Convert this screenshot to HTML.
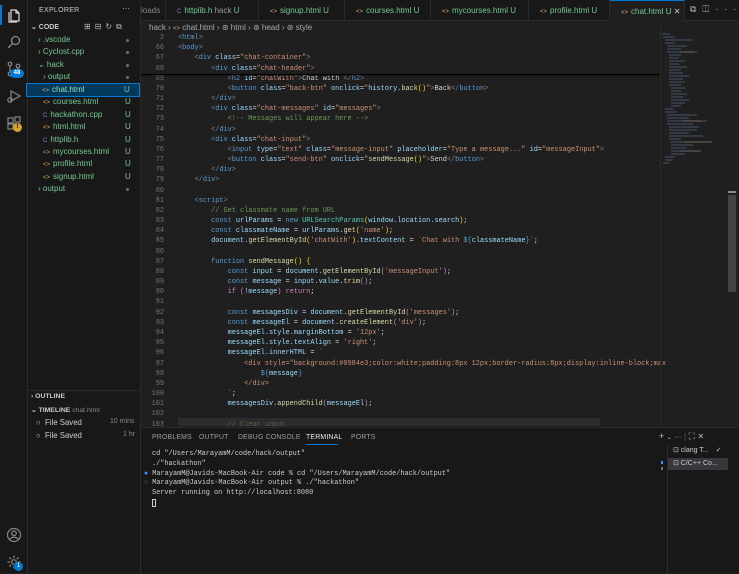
<!DOCTYPE html>
<html><head><meta charset="utf-8"><style>
*{margin:0;padding:0;box-sizing:border-box}
body{width:739px;height:573px;background:#1f1f1f;font-family:"Liberation Sans",sans-serif;overflow:hidden;position:relative;color:#ccc}
.abs{position:absolute}
#act{left:0;top:0;width:28px;height:573px;background:#181818;border-right:1px solid #2b2b2b}
#side{left:28px;top:0;width:113px;height:573px;background:#181818;border-right:1px solid #2b2b2b}
.si{position:absolute;left:0;width:112px;height:12px;font-size:8px;line-height:12px;color:#73c991;white-space:nowrap}
.si .u{position:absolute;left:97px;color:#73c991}
.si .d{position:absolute;left:98px;top:5px;width:3px;height:3px;border-radius:50%;background:#5a7a68}
.ic{color:#e8a86b;font-size:6px;margin-right:3px}
#tabs{left:141px;top:0;width:598px;height:21px;background:#181818;border-bottom:1px solid #2b2b2b}
.tab{position:absolute;top:0;height:21px;font-size:8px;line-height:22px;color:#73c991;border-right:1px solid #2b2b2b;padding-left:11px;white-space:nowrap}
.tab .ic{color:#e8a86b}
#code{left:141px;top:33px;width:520px;font-family:"Liberation Mono",monospace;font-size:6.9px;line-height:10.17px;white-space:pre;color:#d4d4d4}
.ln{display:inline-block;width:23px;text-align:right;color:#6e7681;margin-right:14px}
.t{color:#569cd6}.g{color:#808080}.a{color:#9cdcfe}.s{color:#ce9178}.c{color:#6a9955}.k{color:#569cd6}.f{color:#dcdcaa}.v{color:#9cdcfe}.y{color:#ffd700}.kw{color:#c586c0}
#term{left:141px;top:427px;width:598px;height:146px;background:#181818;border-top:1px solid #2b2b2b}
.pt{position:absolute;top:6px;font-size:6.9px;color:#9d9d9d;letter-spacing:.2px}
.tl{position:absolute;left:11px;font-family:"Liberation Mono",monospace;font-size:6.9px;color:#cccccc;white-space:pre}
</style></head><body>

<div id="act" class="abs">
 <div class="abs" style="left:0;top:5px;width:2px;height:20px;background:#0078d4"></div>
 <svg class="abs" style="left:6px;top:7px" width="16" height="16" viewBox="0 0 16 16" fill="none" stroke="#d7d7d7" stroke-width="1.2"><path d="M5 3h5l3 3v8H5z M10 3v3h3 M3 5v10h8"/></svg>
 <svg class="abs" style="left:6px;top:34px" width="16" height="16" viewBox="0 0 16 16" fill="none" stroke="#868686" stroke-width="1.3"><circle cx="9.5" cy="6.5" r="4"/><path d="M6.5 9.5L2 14"/></svg>
 <svg class="abs" style="left:6px;top:61px" width="16" height="16" viewBox="0 0 16 16" fill="none" stroke="#868686" stroke-width="1.2"><circle cx="4" cy="3" r="1.8"/><circle cx="4" cy="13" r="1.8"/><circle cx="12" cy="5" r="1.8"/><path d="M4 5v6M12 7c0 3-8 2-8 4"/></svg>
 <div class="abs" style="left:10px;top:69px;width:14px;height:9px;border-radius:5px;background:#0078d4;color:#fff;font-size:6px;line-height:9px;text-align:center;font-weight:bold">48</div>
 <svg class="abs" style="left:6px;top:88px" width="16" height="16" viewBox="0 0 16 16" fill="none" stroke="#868686" stroke-width="1.2"><path d="M5 3l9 5-9 5z"/><circle cx="4" cy="12" r="2.2"/></svg>
 <svg class="abs" style="left:6px;top:116px" width="16" height="16" viewBox="0 0 16 16" fill="none" stroke="#868686" stroke-width="1.2"><rect x="2" y="2" width="5" height="5"/><rect x="2" y="8" width="5" height="5"/><rect x="8" y="8" width="5" height="5"/><rect x="9" y="1" width="5" height="5"/></svg>
 <div class="abs" style="left:13px;top:123px;width:9px;height:9px;border-radius:50%;background:#d7a22a;color:#000;font-size:6px;line-height:9px;text-align:center;font-weight:bold">!</div>
 <svg class="abs" style="left:6px;top:527px" width="16" height="16" viewBox="0 0 16 16" fill="none" stroke="#868686" stroke-width="1.2"><circle cx="8" cy="8" r="6.5"/><circle cx="8" cy="6.3" r="2.3"/><path d="M3.5 12.5c2.5-3 6.5-3 9 0"/></svg>
 <svg class="abs" style="left:6px;top:554px" width="16" height="16" viewBox="0 0 16 16" fill="none" stroke="#868686" stroke-width="1.2"><circle cx="8" cy="8" r="2.3"/><path d="M8 1.5v2.5M8 12v2.5M1.5 8h2.5M12 8h2.5M3.4 3.4l1.8 1.8M10.8 10.8l1.8 1.8M3.4 12.6l1.8-1.8M10.8 5.2l1.8-1.8"/></svg>
 <div class="abs" style="left:14px;top:562px;width:9px;height:9px;border-radius:50%;background:#0078d4;color:#fff;font-size:6px;line-height:9px;text-align:center">1</div>
</div>

<div id="side" class="abs">
 <div class="abs" style="left:11px;top:7px;font-size:7px;color:#ccc;letter-spacing:.3px">EXPLORER</div>
 <div class="abs" style="left:94px;top:4px;font-size:8px;color:#ccc">···</div>
 <div class="abs" style="left:3px;top:23px;font-size:7px;color:#ccc;font-weight:bold">⌄ CODE</div>
 <div class="abs" style="left:56px;top:22px;font-size:8px;color:#bbb;letter-spacing:4px">⊞⊟↻⧉</div>
 <div class="si" style="top:34px;padding-left:10px">› .vscode<span class="d"></span></div>
 <div class="si" style="top:46px;padding-left:10px">› Cyclost.cpp<span class="d"></span></div>
 <div class="si" style="top:59px;padding-left:10px">⌄ hack<span class="d"></span></div>
 <div class="si" style="top:71px;padding-left:15px">› output<span class="d"></span></div>
 <div class="si" style="top:84px;padding-left:15px;background:#04395e;outline:1px solid #0078d4;color:#8fe0b0;left:-1px;width:112px"><span class="ic">&lt;&gt;</span>chat.html<span class="u">U</span></div>
 <div class="si" style="top:96px;padding-left:15px"><span class="ic">&lt;&gt;</span>courses.html<span class="u">U</span></div>
 <div class="si" style="top:109px;padding-left:15px"><span class="ic" style="color:#6c9bd2">C</span>hackathon.cpp<span class="u">U</span></div>
 <div class="si" style="top:121px;padding-left:15px"><span class="ic">&lt;&gt;</span>html.html<span class="u">U</span></div>
 <div class="si" style="top:134px;padding-left:15px"><span class="ic" style="color:#a074c4">C</span>httplib.h<span class="u">U</span></div>
 <div class="si" style="top:146px;padding-left:15px"><span class="ic">&lt;&gt;</span>mycourses.html<span class="u">U</span></div>
 <div class="si" style="top:158px;padding-left:15px"><span class="ic">&lt;&gt;</span>profile.html<span class="u">U</span></div>
 <div class="si" style="top:171px;padding-left:15px"><span class="ic">&lt;&gt;</span>signup.html<span class="u">U</span></div>
 <div class="si" style="top:183px;padding-left:10px">› output<span class="d"></span></div>
 <div class="abs" style="left:0;top:390px;width:112px;border-top:1px solid #2b2b2b"></div>
 <div class="abs" style="left:3px;top:393px;font-size:6.8px;color:#ccc;font-weight:bold">› OUTLINE</div>
 <div class="abs" style="left:3px;top:406px;font-size:6.8px;color:#ccc;font-weight:bold">⌄ TIMELINE <span style="font-weight:normal;color:#888">chat.html</span></div>
 <div class="abs" style="left:8px;top:418px;font-size:7.8px;color:#ccc">○&nbsp; File Saved</div>
 <div class="abs" style="left:82px;top:418px;font-size:7px;color:#888">10 mins</div>
 <div class="abs" style="left:8px;top:431px;font-size:7.8px;color:#ccc">○&nbsp; File Saved</div>
 <div class="abs" style="left:95px;top:431px;font-size:7px;color:#888">1 hr</div>
</div>

<div id="tabs" class="abs">
 <div class="tab" style="left:0;width:25px;padding-left:0;color:#888">loads</div>
 <div class="tab" style="left:25px;width:93px"><span class="ic" style="color:#a074c4">C</span>httplib.h <span style="color:#999">hack</span> U</div>
 <div class="tab" style="left:118px;width:86px"><span class="ic">&lt;&gt;</span>signup.html U</div>
 <div class="tab" style="left:204px;width:86px"><span class="ic">&lt;&gt;</span>courses.html U</div>
 <div class="tab" style="left:290px;width:98px"><span class="ic">&lt;&gt;</span>mycourses.html U</div>
 <div class="tab" style="left:388px;width:81px"><span class="ic">&lt;&gt;</span>profile.html U</div>
 <div class="tab" style="left:469px;width:75px;background:#1f1f1f;border-top:1px solid #0078d4;height:22px"><span class="ic">&lt;&gt;</span>chat.html U <span style="color:#ccc">✕</span></div>
 <div class="abs" style="left:549px;top:4px;font-size:9px;color:#bbb;letter-spacing:6px">⧉◫···</div>
</div>

<div class="abs" style="left:149px;top:23px;font-size:8px;color:#a9a9a9;white-space:nowrap">hack › <span style="color:#e8a86b;font-size:6px">&lt;&gt;</span> chat.html › ⊛ html › ⊛ head › ⊛ style</div>

<div id="code" class="abs"><span class="ln">2</span><span class="g">&lt;</span><span class="t">html</span><span class="g">&gt;</span>
<span class="ln">66</span><span class="g">&lt;</span><span class="t">body</span><span class="g">&gt;</span>
<span class="ln">67</span>    <span class="g">&lt;</span><span class="t">div</span> <span class="a">class</span>=<span class="s">"chat-container"</span><span class="g">&gt;</span>
<span class="ln">68</span>        <span class="g">&lt;</span><span class="t">div</span> <span class="a">class</span>=<span class="s">"chat-header"</span><span class="g">&gt;</span>
<span class="ln">69</span>            <span class="g">&lt;</span><span class="t">h2</span> <span class="a">id</span>=<span class="s">"chatWith"</span><span class="g">&gt;</span>Chat with <span class="g">&lt;/</span><span class="t">h2</span><span class="g">&gt;</span>
<span class="ln">70</span>            <span class="g">&lt;</span><span class="t">button</span> <span class="a">class</span>=<span class="s">"back-btn"</span> <span class="a">onclick</span>=<span class="s">"</span><span class="v">history</span>.<span class="f">back</span><span class="y">()</span><span class="s">"</span><span class="g">&gt;</span>Back<span class="g">&lt;/</span><span class="t">button</span><span class="g">&gt;</span>
<span class="ln">71</span>        <span class="g">&lt;/</span><span class="t">div</span><span class="g">&gt;</span>
<span class="ln">72</span>        <span class="g">&lt;</span><span class="t">div</span> <span class="a">class</span>=<span class="s">"chat-messages"</span> <span class="a">id</span>=<span class="s">"messages"</span><span class="g">&gt;</span>
<span class="ln">73</span>            <span class="c">&lt;!-- Messages will appear here --&gt;</span>
<span class="ln">74</span>        <span class="g">&lt;/</span><span class="t">div</span><span class="g">&gt;</span>
<span class="ln">75</span>        <span class="g">&lt;</span><span class="t">div</span> <span class="a">class</span>=<span class="s">"chat-input"</span><span class="g">&gt;</span>
<span class="ln">76</span>            <span class="g">&lt;</span><span class="t">input</span> <span class="a">type</span>=<span class="s">"text"</span> <span class="a">class</span>=<span class="s">"message-input"</span> <span class="a">placeholder</span>=<span class="s">"Type a message..."</span> <span class="a">id</span>=<span class="s">"messageInput"</span><span class="g">&gt;</span>
<span class="ln">77</span>            <span class="g">&lt;</span><span class="t">button</span> <span class="a">class</span>=<span class="s">"send-btn"</span> <span class="a">onclick</span>=<span class="s">"</span><span class="f">sendMessage</span><span class="y">()</span><span class="s">"</span><span class="g">&gt;</span>Send<span class="g">&lt;/</span><span class="t">button</span><span class="g">&gt;</span>
<span class="ln">78</span>        <span class="g">&lt;/</span><span class="t">div</span><span class="g">&gt;</span>
<span class="ln">79</span>    <span class="g">&lt;/</span><span class="t">div</span><span class="g">&gt;</span>
<span class="ln">80</span>
<span class="ln">81</span>    <span class="g">&lt;</span><span class="t">script</span><span class="g">&gt;</span>
<span class="ln">82</span>        <span class="c">// Get classmate name from URL</span>
<span class="ln">83</span>        <span class="k">const</span> <span class="v">urlParams</span> = <span class="k">new</span> <span class="f" style="color:#4ec9b0">URLSearchParams</span><span class="y">(</span><span class="v">window</span>.<span class="v">location</span>.<span class="v">search</span><span class="y">)</span>;
<span class="ln">84</span>        <span class="k">const</span> <span class="v">classmateName</span> = <span class="v">urlParams</span>.<span class="f">get</span><span class="y">(</span><span class="s">'name'</span><span class="y">)</span>;
<span class="ln">85</span>        <span class="v">document</span>.<span class="f">getElementById</span><span class="y">(</span><span class="s">'chatWith'</span><span class="y">)</span>.<span class="v">textContent</span> = <span class="s">`Chat with </span><span class="k">${</span><span class="v">classmateName</span><span class="k">}</span><span class="s">`</span>;
<span class="ln">86</span>
<span class="ln">87</span>        <span class="k">function</span> <span class="f">sendMessage</span><span class="y">() {</span>
<span class="ln">88</span>            <span class="k">const</span> <span class="v">input</span> = <span class="v">document</span>.<span class="f">getElementById</span><span class="kw">(</span><span class="s">'messageInput'</span><span class="kw">)</span>;
<span class="ln">89</span>            <span class="k">const</span> <span class="v">message</span> = <span class="v">input</span>.<span class="v">value</span>.<span class="f">trim</span><span class="kw">()</span>;
<span class="ln">90</span>            <span class="kw">if</span> <span class="kw">(</span>!<span class="v">message</span><span class="kw">)</span> <span class="kw">return</span>;
<span class="ln">91</span>
<span class="ln">92</span>            <span class="k">const</span> <span class="v">messagesDiv</span> = <span class="v">document</span>.<span class="f">getElementById</span><span class="kw">(</span><span class="s">'messages'</span><span class="kw">)</span>;
<span class="ln">93</span>            <span class="k">const</span> <span class="v">messageEl</span> = <span class="v">document</span>.<span class="f">createElement</span><span class="kw">(</span><span class="s">'div'</span><span class="kw">)</span>;
<span class="ln">94</span>            <span class="v">messageEl</span>.<span class="v">style</span>.<span class="v">marginBottom</span> = <span class="s">'12px'</span>;
<span class="ln">95</span>            <span class="v">messageEl</span>.<span class="v">style</span>.<span class="v">textAlign</span> = <span class="s">'right'</span>;
<span class="ln">96</span>            <span class="v">messageEl</span>.<span class="v">innerHTML</span> = <span class="s">`</span>
<span class="ln">97</span>                <span class="s">&lt;div style="background:#0984e3;color:white;padding:8px 12px;border-radius:8px;display:inline-block;max</span>
<span class="ln">98</span>                    <span class="k">${</span><span class="v">message</span><span class="k">}</span>
<span class="ln">99</span>                <span class="s">&lt;/div&gt;</span>
<span class="ln">100</span>            <span class="s">`</span>;
<span class="ln">101</span>            <span class="v">messagesDiv</span>.<span class="f">appendChild</span><span class="kw">(</span><span class="v">messageEl</span><span class="kw">)</span>;
<span class="ln">102</span>
<span class="ln">103</span>            <span class="c" style="opacity:.5">// Clear input</span></div>

<div class="abs" style="left:141px;top:74px;width:520px;height:1px;background:#000;box-shadow:0 1px 2px rgba(0,0,0,.6)"></div>
<div class="abs" style="left:178px;top:418px;width:422px;height:8px;background:rgba(255,255,255,.06)"></div>

<svg class="abs" style="left:660px;top:32px" width="68" height="140" viewBox="0 0 68 140">
 <g stroke="#6a8bb0" stroke-width="0.8" opacity=".7">
  <path d="M2 2h8M3 5h12M5 8h28M5 11h10M7 14h20M7 17h14M7 20h30M9 23h12M9 26h10M9 29h16M9 32h10M9 35h18M9 38h12M9 41h14M9 44h20M9 47h14M9 50h16M9 53h12M11 56h14M11 59h10M11 62h16M11 65h12M11 68h18M11 71h14M11 74h10M5 77h8M5 80h12M7 83h30M7 86h22M7 89h40M7 92h26M9 95h30M9 98h28M9 101h20M9 104h34M9 107h12M11 110h40M11 113h22M11 116h16M11 119h30M11 122h14M5 125h10M5 128h8M3 131h6"/>
 </g>
 <g stroke="#b88a6a" stroke-width="0.8" opacity=".5"><path d="M20 20h14M22 89h20M24 110h28M20 119h20"/></g>
</svg>
<div class="abs" style="left:660px;top:22px;width:1px;height:405px;background:#2b2b2b"></div>
<div class="abs" style="left:728px;top:195px;width:8px;height:97px;background:#444"></div>
<div class="abs" style="left:728px;top:191px;width:8px;height:2px;background:#888"></div>

<div id="term" class="abs">
 <div class="pt" style="left:11px">PROBLEMS</div>
 <div class="pt" style="left:58px">OUTPUT</div>
 <div class="pt" style="left:97px">DEBUG CONSOLE</div>
 <div class="pt" style="left:165px;color:#e7e7e7">TERMINAL</div>
 <div class="abs" style="left:165px;top:16px;width:32px;height:1px;background:#0078d4"></div>
 <div class="pt" style="left:210px">PORTS</div>
 <div class="abs" style="left:518px;top:3px;font-size:9px;color:#bbb;white-space:nowrap">+ <span style="font-size:6px">⌄</span> <span style="font-size:7px">···</span> <span style="color:#555">|</span> ⛶ <span style="font-size:8px">✕</span></div>
 <div class="tl" style="top:22px">cd "/Users/MarayamM/code/hack/output"</div>
 <div class="tl" style="top:32px">./"hackathon"</div>
 <div class="tl" style="top:42px;left:3px"><span style="color:#3794ff">●</span> MarayamM@Javids-MacBook-Air code % cd "/Users/MarayamM/code/hack/output"</div>
 <div class="tl" style="top:51px;left:3px"><span style="color:#777">○</span> MarayamM@Javids-MacBook-Air output % ./"hackathon"</div>
 <div class="tl" style="top:61px">Server running on http://localhost:8080</div>
 <div class="abs" style="left:11px;top:61px;width:4px;height:8px;border:1px solid #ccc;margin-top:10px"></div>
 <div class="abs" style="left:526px;top:17px;width:1px;height:129px;background:#2b2b2b"></div>
 <div class="abs" style="left:527px;top:17px;width:60px;height:12px;font-size:7px;line-height:12px;color:#ccc;padding-left:5px;white-space:nowrap">⊡ clang T... <span style="margin-left:5px">✓</span></div>
 <div class="abs" style="left:527px;top:30px;width:60px;height:12px;font-size:7px;line-height:12px;color:#ccc;padding-left:5px;background:#37373d;white-space:nowrap">⊡ C/C++ Co...</div>
 <div class="abs" style="left:520px;top:33px;width:2px;height:3px;background:#3794ff"></div>
 <div class="abs" style="left:520px;top:39px;width:2px;height:3px;background:#8a6a5a"></div>
</div>
</body></html>
